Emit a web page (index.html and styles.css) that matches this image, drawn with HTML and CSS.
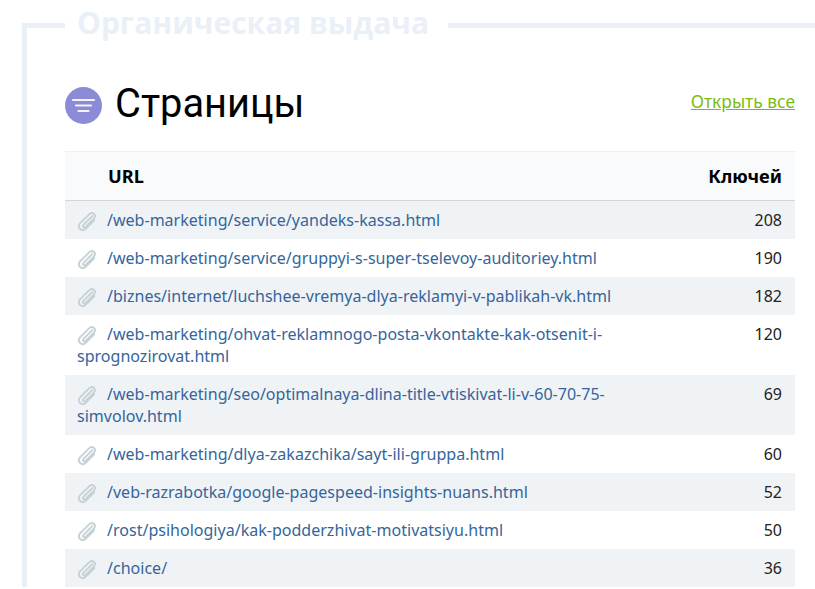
FILE: index.html
```html
<!DOCTYPE html>
<html lang="ru">
<head>
<meta charset="utf-8">
<title>Страницы</title>
<link rel="stylesheet" href="styles.css">
</head>
<body>
<svg class="defs" width="0" height="0"><defs>
<symbol id="clip" viewBox="0 0 20 20"><path d="M14.800 5.500 6.800 13.500c-1.600 1.600.5 3.300 2 1.800l7.400-7.400c3.200-3.200-1.200-7-4.300-3.900L3.800 12c-3.700 3.900 1.700 8.400 5.200 4.900l7.500-7.500" fill="none" stroke="currentColor" stroke-width="1.700" stroke-linecap="round"/></symbol>
</defs></svg>
<fieldset class="section">
<legend class="section-title">Органическая выдача</legend>
<div class="head">
<div class="head-title">
<svg class="head-icon" viewBox="0 0 37 37"><circle cx="18.500" cy="18.500" r="18.500" fill="#8b8bd8"/><path d="M8 13h21M11 18.500h15M13.500 24h10" stroke="#f3f3fb" stroke-width="2.200" stroke-linecap="round"/></svg>
<h1>Страницы</h1>
</div>
<a class="open-all" href="#">Открыть все</a>
</div>
<table class="pages">
<thead><tr><th class="url">URL</th><th class="keys">Ключей</th></tr></thead>
<tbody>
<tr><td><svg class="clip"><use href="#clip"/></svg><a href="#">/web-marketing/service/yandeks-kassa.html</a></td><td class="num">208</td></tr>
<tr><td><svg class="clip"><use href="#clip"/></svg><a href="#">/web-marketing/service/gruppyi-s-super-tselevoy-auditoriey.html</a></td><td class="num">190</td></tr>
<tr><td><svg class="clip"><use href="#clip"/></svg><a href="#">/biznes/internet/luchshee-vremya-dlya-reklamyi-v-pablikah-vk.html</a></td><td class="num">182</td></tr>
<tr><td><svg class="clip"><use href="#clip"/></svg><a href="#">/web-marketing/ohvat-reklamnogo-posta-vkontakte-kak-otsenit-i-sprognozirovat.html</a></td><td class="num">120</td></tr>
<tr><td><svg class="clip"><use href="#clip"/></svg><a href="#">/web-marketing/seo/optimalnaya-dlina-title-vtiskivat-li-v-60-70-75-simvolov.html</a></td><td class="num">69</td></tr>
<tr><td><svg class="clip"><use href="#clip"/></svg><a href="#">/web-marketing/dlya-zakazchika/sayt-ili-gruppa.html</a></td><td class="num">60</td></tr>
<tr><td><svg class="clip"><use href="#clip"/></svg><a href="#">/veb-razrabotka/google-pagespeed-insights-nuans.html</a></td><td class="num">52</td></tr>
<tr><td><svg class="clip"><use href="#clip"/></svg><a href="#">/rost/psihologiya/kak-podderzhivat-motivatsiyu.html</a></td><td class="num">50</td></tr>
<tr><td><svg class="clip"><use href="#clip"/></svg><a href="#">/choice/</a></td><td class="num">36</td></tr>
</tbody>
</table>
</fieldset>
</body>
</html>
```
FILE: styles.css
```css
html, body { margin: 0; padding: 0; height: 589px; overflow: hidden; background: #fff; }
body { font-family: "Noto Sans", sans-serif; font-size: 16px; line-height: 22px; color: #000; }
.defs { position: absolute; }
.section {
  margin: 5px 0 0 22px;
  padding: 0 20px 0 38px;
  min-width: 0;
  border: 0;
  border-top: 5px solid #e9f0f8;
  border-left: 5px solid #e9f0f8;
}
.section-title {
  padding: 0 19px 5px 12px;
  font-family: "Open Sans", sans-serif;
  font-size: 30px;
  line-height: 36px;
  font-weight: 700;
  color: #e9f0f8;
}
.head { display: flex; justify-content: space-between; align-items: flex-start; margin-top: 35px; height: 70px; }
.head-title { display: flex; align-items: center; gap: 13px; }
.head-icon { width: 37px; height: 37px; margin-top: 3px; }
h1 { margin: 0; font-family: Roboto, sans-serif; font-size: 39.800px; line-height: 46px; font-weight: 400; color: #000; }
.open-all { margin-top: 9px; color: #7cbb12; text-decoration: underline; font-size: 17.400px; line-height: 22px; }
.pages { width: 730px; border-collapse: collapse; table-layout: fixed; }
.pages thead tr { background: #f9fafc; border-top: 1px solid #eeeff1; border-bottom: 1px solid #d3d5d9; }
.pages th { height: 48px; padding: 0 13px; font-weight: 700; font-size: 18.200px; text-align: left; color: #000; }
.pages th.url { padding-left: 43px; }
.pages th.keys { width: 120px; text-align: right; }
.pages td { padding: 8px 13px 8px 12px; vertical-align: top; color: #222; font-size: 16.050px; }
.pages tbody tr:nth-child(odd) { background: #f0f3f6; }
.pages td.num { text-align: right; font-size: 16px; }
.pages a { color: #35659b; text-decoration: none; }
.clip { width: 22px; height: 22px; margin: -3px 9px -1px -1px; vertical-align: -5px; color: #c5d1d6; }
```
